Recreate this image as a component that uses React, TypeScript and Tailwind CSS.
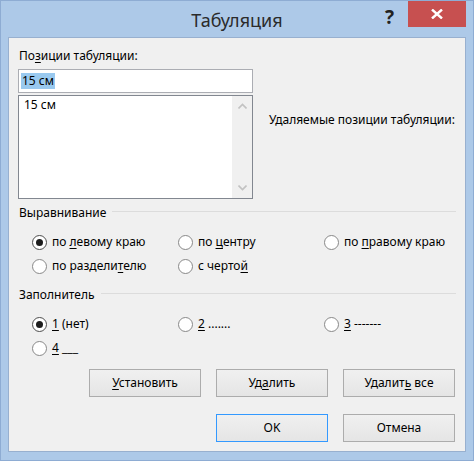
import React from 'react';

type Opt = { pre?: string; key: string; post?: string; checked?: boolean };

function Label({ pre = '', k, post = '' }: { pre?: string; k: string; post?: string }) {
  return (
    <span>
      {pre}
      <span className="underline underline-offset-2">{k}</span>
      {post}
    </span>
  );
}

function Radio({ opt }: { opt: Opt }) {
  return (
    <div className="flex items-center h-[24px]">
      <span
        className={
          'w-[15px] h-[15px] rounded-full border bg-white flex items-center justify-center shrink-0 ' +
          (opt.checked ? 'border-[#4d4d4d]' : 'border-[#888888]')
        }
      >
        {opt.checked && <span className="w-[7px] h-[7px] rounded-full bg-[#1c1c1c]" />}
      </span>
      <span className="ml-[5px] whitespace-nowrap">
        <Label pre={opt.pre} k={opt.key} post={opt.post} />
      </span>
    </div>
  );
}

function Group({ title, rows }: { title: string; rows: Opt[][] }) {
  return (
    <div>
      <div className="flex h-[16px] pr-[9px]">
        <span className="pl-px">{title}</span>
        <span className="flex-1 h-px bg-[#dcdcdc] mt-[6px] ml-[6px]" />
      </div>
      <div className="pl-[14px] mt-[9px]">
        {rows.map((row, i) => (
          <div key={i} className="grid grid-cols-[146px_146px_auto]">
            {row.map((o, j) => (
              <Radio key={j} opt={o} />
            ))}
          </div>
        ))}
      </div>
    </div>
  );
}

function Button({ children, primary }: { children: React.ReactNode; primary?: boolean }) {
  return (
    <button
      className={
        'w-[112px] h-[28px] border bg-gradient-to-b from-[#f0f0f0] to-[#e5e5e5] text-black ' +
        (primary ? 'border-[#3399ff]' : 'border-[#acacac]')
      }
    >
      {children}
    </button>
  );
}

export default function App() {
  return (
    <div className="w-[474px] h-[461px] bg-[#adc9e8] border border-[#8eacd3] flex flex-col font-['Noto_Sans',sans-serif] text-[12px] leading-[16px] text-black">
      <div className="relative h-[36px] shrink-0 flex items-center justify-center">
        <span className="text-[18px] text-[#2b2b2b] leading-[24px] mt-[2px]">Табуляция</span>
        <span className="absolute left-[384px] top-[4px] text-[19px] font-bold text-[#222222] leading-[24px]">?</span>
        <div className="absolute right-[7px] top-0 w-[58px] h-[26px] bg-[#c75050] flex items-center justify-center">
          <svg width="12" height="10" viewBox="0 0 12 10">
            <path d="M1 0.5 L11 9.5 M11 0.5 L1 9.5" stroke="#ffffff" strokeWidth="2.4" />
          </svg>
        </div>
      </div>

      <div className="flex-1 ml-[7px] mr-[7px] mb-[8px] border border-[#98b0cf] bg-[#f0f0f0] pl-[9px] flex flex-col">
        <div className="mt-[10px] pl-px">
          По<span className="underline underline-offset-2">з</span>иции табуляции:
        </div>

        <div className="flex mt-[5px]">
          <div className="w-[235px] flex flex-col">
            <div className="h-[24px] bg-white border border-[#abadb3] flex items-center pl-[2px]">
              <span className="bg-[#99c9ef] px-px leading-[16px]">15 см</span>
            </div>
            <div className="h-[104px] mt-[2px] bg-white border border-[#828790] flex">
              <div className="flex-1 pl-[5px] pt-[1px]">15 см</div>
              <div className="w-[20px] bg-[#f0f0f0] flex flex-col items-center justify-between py-[7px]">
                <svg width="9" height="6" viewBox="0 0 9 6">
                  <path d="M0.5 5.5 L4.5 1.5 L8.5 5.5" stroke="#c2c2c2" strokeWidth="1.6" fill="none" />
                </svg>
                <svg width="9" height="6" viewBox="0 0 9 6">
                  <path d="M0.5 0.5 L4.5 4.5 L8.5 0.5" stroke="#c2c2c2" strokeWidth="1.6" fill="none" />
                </svg>
              </div>
            </div>
          </div>
          <div className="ml-[16px] pt-[43px] whitespace-nowrap">Удаляемые позиции табуляции:</div>
        </div>

        <div className="mt-[6px]">
          <Group
            title="Выравнивание"
            rows={[
              [
                { pre: 'по ', key: 'л', post: 'евому краю', checked: true },
                { pre: 'по ', key: 'ц', post: 'ентру' },
                { pre: 'по ', key: 'п', post: 'равому краю' },
              ],
              [
                { pre: 'по раздели', key: 'т', post: 'елю' },
                { pre: 'с черто', key: 'й' },
              ],
            ]}
          />
        </div>

        <div className="mt-[9px]">
          <Group
            title="Заполнитель"
            rows={[
              [
                { key: '1', post: ' (нет)', checked: true },
                { key: '2', post: ' .......' },
                { key: '3', post: ' -------' },
              ],
              [{ key: '4', post: ' ___' }],
            ]}
          />
        </div>

        <div className="flex justify-end gap-[15px] pr-[10px] mt-[9px]">
          <Button>
            <Label k="У" post="становить" />
          </Button>
          <Button>
            <Label pre="Уд" k="а" post="лить" />
          </Button>
          <Button>
            <Label pre="Удалит" k="ь" post=" все" />
          </Button>
        </div>
        <div className="flex justify-end gap-[15px] pr-[10px] mt-[17px]">
          <Button primary>OK</Button>
          <Button>Отмена</Button>
        </div>
      </div>
    </div>
  );
}
